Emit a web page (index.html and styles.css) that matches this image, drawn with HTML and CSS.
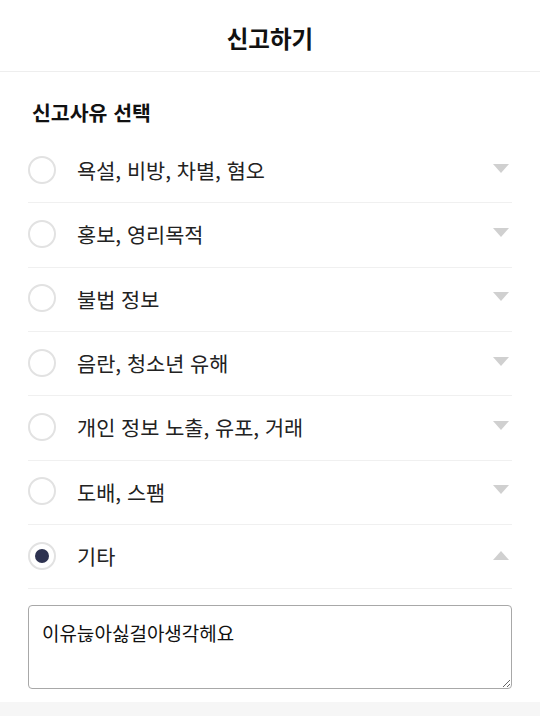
FILE: index.html
```html
<!DOCTYPE html>
<html lang="ko">
<head>
    <meta charset="UTF-8">
    <meta name="viewport" content="width=device-width, initial-scale=1.0">
    <title>신고하기</title>
    <link rel="stylesheet" href="styles.css">
</head>
<body>
    <div class="header">신고하기</div>
    <div class="content">
        <div class="section-title">신고사유 선택</div>
        <ul class="reason-list">
            <li class="reason"><span class="radio"></span><span class="label">욕설, 비방, 차별, 혐오</span><span class="arrow down"></span></li>
            <li class="reason"><span class="radio"></span><span class="label">홍보, 영리목적</span><span class="arrow down"></span></li>
            <li class="reason"><span class="radio"></span><span class="label">불법 정보</span><span class="arrow down"></span></li>
            <li class="reason"><span class="radio"></span><span class="label">음란, 청소년 유해</span><span class="arrow down"></span></li>
            <li class="reason"><span class="radio"></span><span class="label">개인 정보 노출, 유포, 거래</span><span class="arrow down"></span></li>
            <li class="reason"><span class="radio"></span><span class="label">도배, 스팸</span><span class="arrow down"></span></li>
            <li class="reason"><span class="radio checked"></span><span class="label">기타</span><span class="arrow up"></span></li>
        </ul>
        <textarea class="reason-input">이유늖아싫걸아생각헤요</textarea>
    </div>
    <div class="footer-band"></div>
</body>
</html>
```

FILE: styles.css
```css
body {
    font-family: "Noto Sans CJK KR", "Noto Sans", sans-serif;
    background: #fff;
    color: #111;
    margin: 0;
}
.header {
    height: 72px;
    box-sizing: border-box;
    border-bottom: 1px solid #eee;
    display: flex;
    align-items: center;
    justify-content: center;
    font-size: 23.5px;
    font-weight: bold;
    padding-top: 4px;
}
.content {
    padding: 0 28px;
}
.section-title {
    font-size: 20.5px;
    font-weight: bold;
    line-height: 26px;
    padding: 27px 0 0 4px;
    margin-bottom: 14px;
}
.reason-list {
    list-style: none;
    margin: 0;
    padding: 0;
}
.reason {
    height: 64.33px;
    box-sizing: border-box;
    border-bottom: 1px solid #f0f0f0;
    display: flex;
    align-items: center;
}
.radio {
    width: 28px;
    height: 28px;
    box-sizing: border-box;
    border: 2px solid #e2e2e2;
    border-radius: 50%;
    display: flex;
    align-items: center;
    justify-content: center;
    margin-top: -2px;
}
.radio.checked::after {
    content: "";
    width: 14px;
    height: 14px;
    border-radius: 50%;
    background: #2d3250;
}
.label {
    flex: 1;
    margin-left: 21px;
    font-size: 20.8px;
    color: #222;
    margin-top: -1px;
}
.arrow {
    width: 0;
    height: 0;
    border-left: 8px solid transparent;
    border-right: 8px solid transparent;
    margin-right: 3px;
}
.arrow.down {
    border-top: 9px solid #d0d0d0;
    margin-top: -5px;
}
.arrow.up {
    border-bottom: 9px solid #d0d0d0;
    margin-top: -3px;
}
.reason-input {
    display: block;
    width: 100%;
    height: 84px;
    box-sizing: border-box;
    margin-top: 16px;
    border: 1px solid #a8a8a8;
    border-radius: 4px;
    padding: 14px 13px;
    font-family: "Noto Sans CJK KR", sans-serif;
    font-size: 19px;
    line-height: 26px;
    color: #111;
    outline: none;
}
.footer-band {
    margin-top: 13px;
    height: 20px;
    background: #f6f6f6;
}
```
